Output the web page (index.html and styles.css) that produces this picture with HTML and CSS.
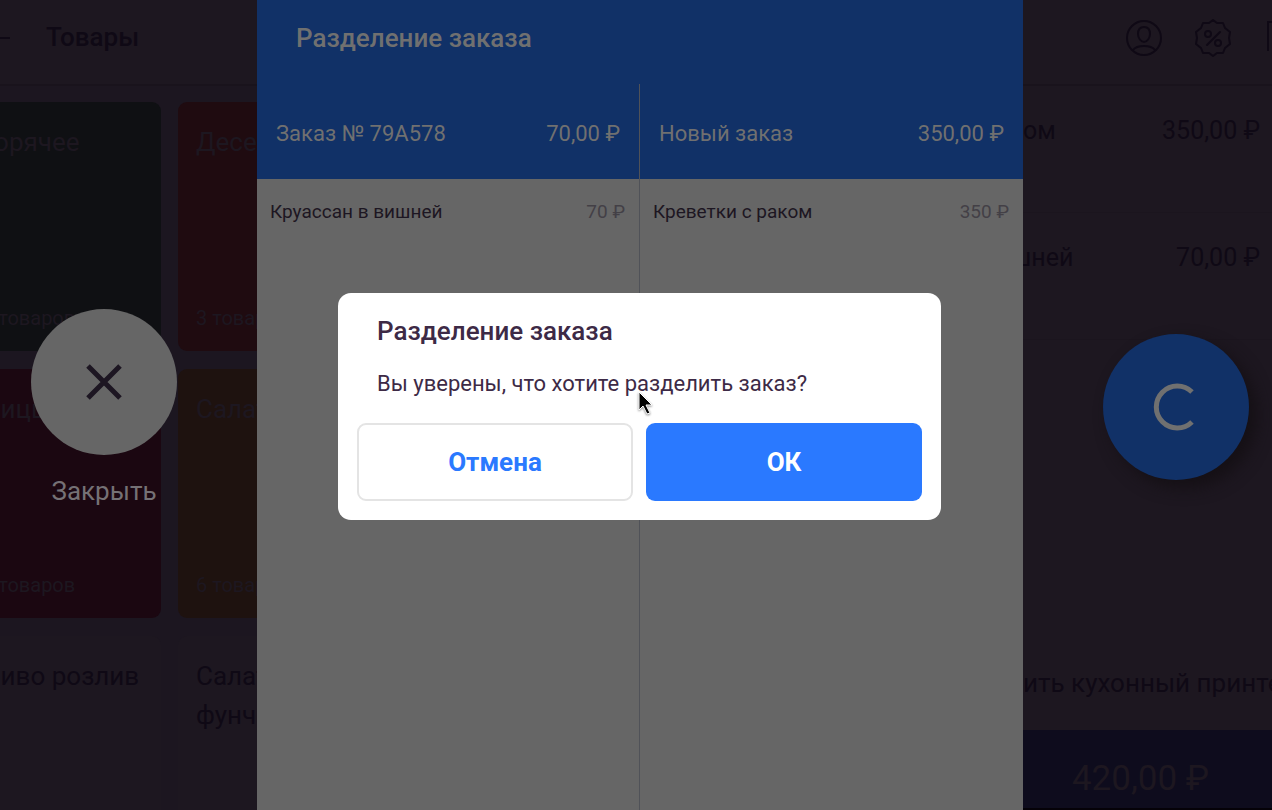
FILE: index.html
```html
<!DOCTYPE html>
<html lang="ru">

<head>
    <meta charset="UTF-8" />
    <meta name="viewport" content="width=device-width, initial-scale=1.0" />
    <title>Разделение заказа</title>
    <link rel="stylesheet" href="styles.css">
</head>

<body>
    <div class="screen">
        <!-- каталог -->
        <section class="catalog">
            <header class="topbar">
                <a class="back" href="#" aria-label="Назад">
                    <svg width="26" height="22" viewBox="0 0 26 22">
                        <path d="M11 2 2 11l9 9M2 11h24" />
                    </svg>
                </a>
                <h1>Товары</h1>
            </header>
            <ul class="cards">
                <li class="card hot">
                    <h2>Горячее</h2>
                    <p>6 товаров</p>
                </li>
                <li class="card dessert">
                    <h2>Десерты</h2>
                    <p>3 товара</p>
                </li>
                <li class="card pizza">
                    <h2>Пиццы</h2>
                    <p>8 товаров</p>
                </li>
                <li class="card salad">
                    <h2>Салаты</h2>
                    <p>6 товаров</p>
                </li>
                <li class="card plain">
                    <h2>Пиво розлив</h2>
                </li>
                <li class="card plain">
                    <h2>Салат фунчоза</h2>
                </li>
            </ul>
            <div class="close">
                <button id="close" type="button" aria-label="Закрыть">
                    <svg width="38" height="38" viewBox="0 0 38 38">
                        <path d="M3 3l32 32M35 3 3 35" />
                    </svg>
                </button>
                <label for="close">Закрыть</label>
            </div>
        </section>

        <!-- разделение заказа -->
        <main class="split">
            <header class="split-title">
                <h2>Разделение заказа</h2>
            </header>
            <div class="columns">
                <section class="column">
                    <div class="column-head"><span>Заказ № 79A578</span><span>70,00 ₽</span></div>
                    <div class="position"><span>Круассан в вишней</span><span class="sum">70 ₽</span></div>
                </section>
                <section class="column">
                    <div class="column-head"><span>Новый заказ</span><span>350,00 ₽</span></div>
                    <div class="position"><span>Креветки с раком</span><span class="sum">350 ₽</span></div>
                </section>
            </div>
        </main>

        <!-- текущий заказ -->
        <section class="order">
            <header class="topbar tools">
                <button type="button" aria-label="Клиент">
                    <svg width="38" height="38" viewBox="0 0 38 38">
                        <circle cx="19" cy="19" r="17" />
                        <path d="M19 8c4 0 6 3 6 7s-3 8-6 8-6-4-6-8 2-7 6-7z" />
                        <path d="M8 31q3-4 11-4t11 4" />
                    </svg>
                </button>
                <button type="button" aria-label="Скидка">
                    <svg width="38" height="38" viewBox="0 0 38 38" stroke-linejoin="round" stroke-linecap="round">
                        <path d="M19 1l4 3 6 0 2 5 5 4-1 6 1 6-5 4-2 5-6 0-4 3-4-3-6 0-2-5-5-4 1-6-1-6 5-4 2-5 6 0z" />
                        <circle cx="14" cy="15" r="3" />
                        <circle cx="24" cy="24" r="3" />
                        <path d="M26 13 13 26" />
                    </svg>
                </button>
                <button type="button" aria-label="Чек">
                    <svg width="38" height="38" viewBox="0 0 38 38">
                        <path d="M5 32V3h30v29" />
                    </svg>
                </button>
            </header>
            <ul class="lines">
                <li><span>ом</span><span>350,00 ₽</span></li>
                <li><span class="cut">шней</span><span>70,00 ₽</span></li>
            </ul>
            <button class="round-action" type="button" aria-label="Разделить">
                <svg width="50" height="50" viewBox="0 0 50 50">
                    <path d="M41 10a21 21 0 1 0 0 30" />
                </svg>
            </button>
            <p class="printer">ить кухонный принтер</p>
            <button class="total" type="button">420,00 ₽</button>
        </section>

        <!-- подтверждение -->
        <div class="overlay">
            <div class="dialog" role="dialog" aria-labelledby="dialog-title">
                <h2 id="dialog-title">Разделение заказа</h2>
                <p>Вы уверены, что хотите разделить заказ?</p>
                <div class="actions">
                    <button class="cancel" type="button">Отмена</button>
                    <button class="ok" type="button">ОК</button>
                </div>
                <svg class="cursor" width="18" height="26" viewBox="0 0 18 26">
                    <path d="M2 1v18l4-4 4 8 3-1-4-8h6z" />
                </svg>
            </div>
        </div>
    </div>
</body>

</html>
```
FILE: styles.css
```css
* {
    box-sizing: border-box;
    margin: 0;
    padding: 0;
}

body {
    font-family: Roboto, "Noto Sans", sans-serif;
    font-size: 26px;
    line-height: 39px;
    color: #0f0915;
    background-color: #1d1720;
}

ul {
    list-style: none;
}

button {
    font: inherit;
    border: none;
    background: none;
}

svg {
    display: block;
    fill: none;
    stroke: currentColor;
}

.screen {
    position: relative;
    display: grid;
    grid-template-columns: 257fr 766fr 249fr;
    height: 100vh;
    overflow: hidden;
}

.topbar {
    display: flex;
    align-items: center;
    height: 86px;
    padding-bottom: 9px;
    border-bottom: 2px solid #19131c;
}

/* каталог */
.catalog {
    position: relative;
    min-width: 0;
    overflow: hidden;
    background-color: #1c1620;
}

.catalog .topbar {
    gap: 36px;
    margin-left: -16px;
    background-color: #1d1720;
}

.catalog h1 {
    font-size: 26px;
    font-weight: 500;
}

.back {
    color: inherit;
}

.back svg {
    stroke-width: 2;
}

.cards {
    display: grid;
    grid-template-columns: 197px 197px;
    grid-auto-rows: 249px;
    gap: 18px 17px;
    margin: 16px 0 0 -36px;
}

.card {
    display: flex;
    flex-direction: column;
    justify-content: space-between;
    padding: 21px 18px 13px;
    border-radius: 9px;
    color: #1d1720;
}

.card h2 {
    font-size: 26px;
    font-weight: 400;
}

.card p {
    font-size: 20px;
}

.hot {
    background-color: #0f1013;
}

.dessert {
    background-color: #1f0b10;
}

.pizza {
    background-color: #1b0711;
}

.salad {
    background-color: #1e120f;
}

.plain {
    color: #0f0915;
    background-color: #1d1720;
}

.close {
    position: absolute;
    top: 309px;
    left: 31px;
    display: flex;
    flex-direction: column;
    align-items: center;
    gap: 17px;
    width: 146px;
    color: #757175;
}

.close button {
    display: grid;
    place-items: center;
    width: 146px;
    height: 146px;
    border-radius: 50%;
    color: #1d1622;
    background-color: #666;
}

.close svg {
    stroke-width: 5;
}

/* разделение заказа */
.split {
    display: flex;
    flex-direction: column;
    background-color: #666;
}

.split-title {
    height: 84px;
    padding: 19px 39px;
    color: #707070;
    background-color: #113167;
}

.split-title h2 {
    font-size: 26px;
    font-weight: 500;
}

.columns {
    display: grid;
    grid-template-columns: 1fr 1fr;
    flex: 1;
}

.column:first-child {
    border-right: 1px solid #505258;
}

.column-head {
    display: flex;
    justify-content: space-between;
    height: 95px;
    padding: 30px 19px;
    font-size: 22px;
    color: #707070;
    background-color: #113167;
}

.position {
    display: flex;
    justify-content: space-between;
    padding: 13px 14px 13px 13px;
    font-size: 19px;
    color: #1d1622;
}

.sum {
    color: #434046;
}

/* текущий заказ */
.order {
    display: flex;
    flex-direction: column;
    min-width: 0;
    overflow: hidden;
    background-color: #1d1720;
}

.tools {
    gap: 31px;
    padding-left: 102px;
}

.tools button {
    color: inherit;
}

.tools svg {
    stroke-width: 2;
}

.lines li {
    display: flex;
    justify-content: space-between;
    height: 127px;
    padding: 25px 12px 0 0;
    font-size: 25px;
    border-bottom: 1px solid #1b151e;
}

.cut {
    margin-left: -12px;
}

.round-action {
    display: grid;
    place-items: center;
    align-self: flex-end;
    width: 146px;
    height: 146px;
    margin: -6px 23px 0 0;
    border-radius: 50%;
    color: #707070;
    background-color: #113167;
    box-shadow: 8px 8px 16px #151015;
}

.round-action svg {
    stroke-width: 5;
}

.printer {
    margin-top: auto;
    padding-bottom: 27px;
    white-space: nowrap;
}

.total {
    height: 80px;
    padding: 18px 14px 0 0;
    font-size: 35px;
    color: #1d1720;
    background-color: #0e0c1d;
    border-bottom: 2px solid #050208;
}

/* подтверждение */
.overlay {
    position: absolute;
    inset: 0;
    display: grid;
    place-items: center;
    padding: 2px 0 0 7px;
}

.dialog {
    position: relative;
    width: 603px;
    padding: 19px;
    border-radius: 13px;
    color: #3d2a46;
    background-color: #fff;
}

.dialog h2 {
    padding: 0 20px;
    font-size: 26px;
    font-weight: 500;
}

.dialog p {
    padding: 13px 20px 20px;
    font-size: 22px;
}

.actions {
    display: grid;
    grid-template-columns: 1fr 1fr;
    gap: 13px;
}

.actions button {
    height: 78px;
    padding-top: 2px;
    border-radius: 9px;
    font-weight: 700;
}

.actions .cancel {
    border: 2px solid #e4e4e4;
    color: #2a79ff;
    background-color: #fff;
}

.actions .ok {
    color: #fff;
    background-color: #2a79ff;
}

.cursor {
    position: absolute;
    top: 98px;
    left: 299px;
    fill: #000;
    stroke: #fff;
    filter: drop-shadow(0 1px 1px #888);
}
```
